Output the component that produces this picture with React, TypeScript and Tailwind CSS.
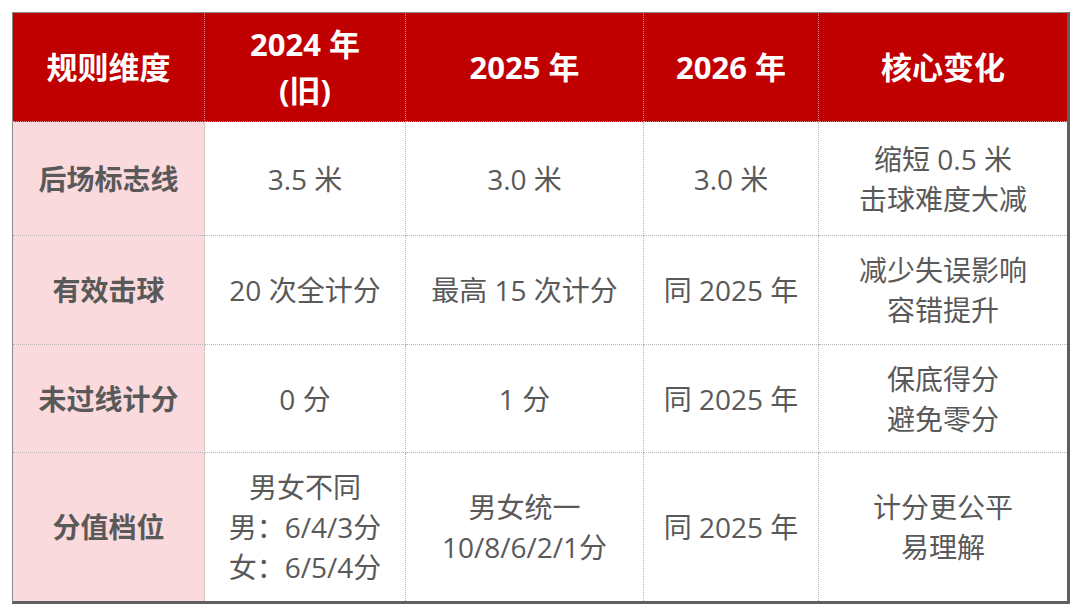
import React from "react"

const font = { fontFamily: '"Open Sans", "Noto Sans CJK SC", sans-serif' }

const headers: string[][] = [["规则维度"], ["2024 年", "(旧)"], ["2025 年"], ["2026 年"], ["核心变化"]]

const rows: { label: string; cells: string[][]; h: string }[] = [
  { label: "后场标志线", cells: [["3.5 米"], ["3.0 米"], ["3.0 米"], ["缩短 0.5 米", "击球难度大减"]], h: "h-[114px]" },
  { label: "有效击球", cells: [["20 次全计分"], ["最高 15 次计分"], ["同 2025 年"], ["减少失误影响", "容错提升"]], h: "h-[109px]" },
  { label: "未过线计分", cells: [["0 分"], ["1 分"], ["同 2025 年"], ["保底得分", "避免零分"]], h: "h-[108px]" },
  {
    label: "分值档位",
    cells: [["男女不同", "男：6/4/3分", "女：6/5/4分"], ["男女统一", "10/8/6/2/1分"], ["同 2025 年"], ["计分更公平", "易理解"]],
    h: "h-[148px]",
  },
]

export default function App() {
  return (
    <div className="w-[1080px] h-[615px] bg-white pt-[12px] pl-[12px]" style={font}>
      <div className="w-[1058px] border-l border-t border-[#8a8a8a] border-r-[3px] border-b-[3px] border-r-[#5f5f5f] border-b-[#5f5f5f]">
        {/* Header */}
        <div className="grid grid-cols-[192px_201px_238px_175px_248px] h-[109px] bg-[#c00000]">
          {headers.map((lines, i) => (
            <div
              key={i}
              className={`flex flex-col items-center justify-center text-white font-bold text-[31px] leading-[46px] border-b border-dotted border-[#d98c8c] ${
                i < 4 ? "border-r" : ""
              }`}
            >
              {lines.map((l) => (
                <span key={l}>{l}</span>
              ))}
            </div>
          ))}
        </div>

        {/* Body */}
        {rows.map((row, ri) => (
          <div key={row.label} className={`grid grid-cols-[192px_201px_238px_175px_248px] ${row.h}`}>
            <div
              className={`flex items-center justify-center bg-[#fadadd] text-[#595959] font-bold text-[28px] border-r border-dotted border-[#b5b5b5] ${
                ri < 3 ? "border-b" : ""
              }`}
            >
              {row.label}
            </div>
            {row.cells.map((lines, ci) => (
              <div
                key={ci}
                className={`flex flex-col items-center justify-center text-[#595959] text-[28px] leading-[40px] border-dotted border-[#b5b5b5] ${
                  ci < 3 ? "border-r" : ""
                } ${ri < 3 ? "border-b" : ""}`}
              >
                {lines.map((l) => (
                  <span key={l}>{l}</span>
                ))}
              </div>
            ))}
          </div>
        ))}
      </div>
    </div>
  )
}
